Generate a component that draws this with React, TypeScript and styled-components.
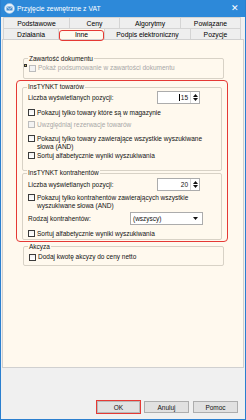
import React from "react";
import styled, { createGlobalStyle, css } from "styled-components";

const Global = createGlobalStyle`
  html, body { margin: 0; padding: 0; background: #ffffff; }
  body { font-family: "Liberation Sans", Arial, sans-serif; }
  * { box-sizing: border-box; }
`;

const Window = styled.div`
  width: 246px;
  height: 420px;
  border: 1px solid #2a7fcf;
  border-top: none;
  display: flex;
  flex-direction: column;
  background: #f0f0f0;
  font-size: 6.5px;
  color: #111;
`;

const TitleBar = styled.div`
  height: 17px;
  flex: 0 0 17px;
  background: #2d89d9;
  display: flex;
  align-items: center;
  padding: 0 6px 0 3px;
  gap: 2px;
  color: #fff;
  font-size: 6.8px;
`;

const TitleText = styled.span`
  flex: 1;
  white-space: nowrap;
`;

const CloseX = styled.span`
  font-size: 9px;
  line-height: 1;
`;

const Tabs = styled.div`
  display: flex;
  flex-direction: column;
  padding: 0 3px 0 2px;
`;

const TabRow = styled.div`
  display: flex;
  height: 11px;
`;

const Tab = styled.div<{ $w: number; $active?: boolean }>`
  width: ${(p) => p.$w}px;
  border: 1px solid #d4d4d4;
  border-bottom: none;
  margin-left: -1px;
  background: ${(p) => (p.$active ? "#fff9ee" : "#eeeeee")};
  display: flex;
  align-items: center;
  justify-content: center;
  font-size: 6.8px;
  color: #000;
  white-space: nowrap;
  position: relative;
  &:first-child { margin-left: 0; }
`;

const TabMark = styled.span`
  position: absolute;
  left: 0;
  top: 1px;
  right: 0;
  bottom: -2px;
  border: 1.5px solid #e53935;
  border-radius: 3px;
`;

const Panel = styled.div`
  height: 329px;
  flex: 0 0 329px;
  margin: 0 1px 0 1px;
  background: #fff9ee;
  border: 1px solid #d0d0d0;
  padding: 14px 15px 0 13px;
  display: flex;
  flex-direction: column;
`;

const Group = styled.div<{ $h: number; $mt?: number; $pt: number; $out?: boolean }>`
  margin: ${(p) => p.$mt ?? 0}px ${(p) => (p.$out ? 4 : 5)}px 0 ${(p) => (p.$out ? 7 : 5)}px;
  padding: ${(p) => p.$pt}px 0 0 5px;
  height: ${(p) => p.$h}px;
  flex: 0 0 ${(p) => p.$h}px;
  border: 1px solid #d8d2c6;
  border-radius: 2px;
  display: flex;
  flex-direction: column;
  position: relative;
`;

const Legend = styled.span`
  position: absolute;
  top: -4.5px;
  left: 4px;
  padding: 0 1px;
  background: #fff9ee;
  font-size: 6.5px;
  line-height: 7px;
  white-space: nowrap;
`;

const RedBox = styled.div`
  margin-top: 1px;
  height: 162px;
  flex: 0 0 162px;
  border: 1.5px solid #e53935;
  border-radius: 4px;
  display: flex;
  flex-direction: column;
  padding-top: 5.5px;
`;

const FieldRow = styled.div<{ $pr: number; $mb: number }>`
  height: 13px;
  flex: 0 0 13px;
  margin-bottom: ${(p) => p.$mb}px;
  padding-right: ${(p) => p.$pr}px;
  display: flex;
  justify-content: space-between;
  align-items: center;
  white-space: nowrap;
`;

const CheckRow = styled.label<{ $h: number; $disabled?: boolean }>`
  display: flex;
  align-items: flex-start;
  gap: 2px;
  height: ${(p) => p.$h}px;
  flex: 0 0 ${(p) => p.$h}px;
  line-height: 8px;
  color: ${(p) => (p.$disabled ? "#a7a7a7" : "#111")};
`;

const Box = styled.span<{ $disabled?: boolean }>`
  flex: 0 0 7px;
  width: 7px;
  height: 7px;
  margin-top: 0.5px;
  border: 1px solid ${(p) => (p.$disabled ? "#bcbcbc" : "#3c3c3c")};
  background: ${(p) =>
    p.$disabled ? "#f3f3f3" : "linear-gradient(#f2f2f2, #ffffff)"};
`;

const Label = styled.span`
  white-space: nowrap;
`;

const Wrap = styled.span`
  width: 180px;
`;

const Spin = styled.div`
  flex: 0 0 43px;
  width: 43px;
  height: 13px;
  border: 1px solid #acacac;
  background: #fff;
  display: flex;
  align-items: center;
`;

const SpinValue = styled.span`
  flex: 1;
  text-align: right;
  padding-right: 2px;
`;

const Caret = styled.span`
  display: inline-block;
  width: 1px;
  height: 7px;
  background: #000;
  margin-right: 1px;
  vertical-align: -1px;
`;

const SpinBtns = styled.div`
  width: 9px;
  height: 100%;
  border-left: 1px solid #d6d6d6;
  display: flex;
  flex-direction: column;
  align-items: center;
  justify-content: center;
  gap: 1px;
`;

const Select = styled.div`
  flex: 0 0 73px;
  width: 73px;
  height: 13px;
  border: 1px solid #acacac;
  background: #fff;
  display: flex;
  align-items: center;
  padding: 0 4px 0 2px;
  justify-content: space-between;
`;

const Tiny = styled.span`
  position: absolute;
  left: -5px;
  top: 0px;
  width: 3px;
  height: 3px;
  background: #d8c060;
  border: 0.5px solid #333;
`;

const RelWrap = styled.span`
  position: relative;
  display: inline-flex;
`;

const Footer = styled.div`
  flex: 1;
  display: flex;
  justify-content: flex-end;
  align-items: flex-start;
  padding: 33px 7px 0 0;
  gap: 4px;
`;

const Btn = styled.div<{ $mark?: boolean }>`
  width: 45px;
  height: 12px;
  border: 1px solid #adadad;
  background: #e1e1e1;
  display: flex;
  align-items: center;
  justify-content: center;
  font-size: 6.5px;
  ${(p) =>
    p.$mark &&
    css`
      outline: 1.5px solid #e53935;
      outline-offset: 0px;
      border-color: #b8b8b8;
      width: 43px;
    `}
`;

const Arrow = ({ up }: { up?: boolean }) => (
  <svg width="5" height="3" viewBox="0 0 5 3">
    <path d={up ? "M0 3 L2.5 0 L5 3 Z" : "M0 0 L2.5 3 L5 0 Z"} fill="#111" />
  </svg>
);

const Check = ({
  h,
  disabled,
  children,
  marker,
}: {
  h: number;
  disabled?: boolean;
  children: React.ReactNode;
  marker?: boolean;
}) => (
  <CheckRow $h={h} $disabled={disabled}>
    <RelWrap>
      {marker && <Tiny />}
      <Box $disabled={disabled} />
    </RelWrap>
    {children}
  </CheckRow>
);

export default function App() {
  return (
    <>
      <Global />
      <Window>
        <TitleBar>
          <svg width="11" height="11" viewBox="0 0 11 11">
            <circle cx="5.5" cy="5.5" r="5" fill="#e8f2fb" stroke="#9cc3e6" strokeWidth="0.6" />
            <rect x="2.5" y="3.5" width="6" height="4" fill="#4a8fd0" />
            <path d="M2.5 3.5 L5.5 6 L8.5 3.5" stroke="#fff" strokeWidth="0.6" fill="none" />
          </svg>
          <TitleText>Przyjęcie zewnętrzne z VAT</TitleText>
          <CloseX>✕</CloseX>
        </TitleBar>
        <Tabs>
          <TabRow>
            <Tab $w={67}>Podstawowe</Tab>
            <Tab $w={51}>Ceny</Tab>
            <Tab $w={62}>Algorytmy</Tab>
            <Tab $w={61}>Powiązane</Tab>
          </TabRow>
          <TabRow>
            <Tab $w={56}>Działania</Tab>
            <Tab $w={47} $active>
              Inne
              <TabMark />
            </Tab>
            <Tab $w={87}>Podpis elektroniczny</Tab>
            <Tab $w={51}>Pozycje</Tab>
          </TabRow>
        </Tabs>
        <Panel>
          <Group $h={21} $mt={4} $pt={5} $out>
            <Legend>Zawartość dokumentu</Legend>
            <Check h={8} disabled marker>
              <Label>Pokaż podsumowanie w zawartości dokumentu</Label>
            </Check>
          </Group>
          <RedBox>
            <Group $h={84} $pt={3}>
              <Legend>InsTYNKT towarów</Legend>
              <FieldRow $pr={21} $mb={5}>
                <Label>Liczba wyświetlanych pozycji:</Label>
                <Spin>
                  <SpinValue>
                    <Caret />15
                  </SpinValue>
                  <SpinBtns>
                    <Arrow up />
                    <Arrow />
                  </SpinBtns>
                </Spin>
              </FieldRow>
              <Check h={12}>
                <Label>Pokazuj tylko towary które są w magazynie</Label>
              </Check>
              <Check h={14} disabled>
                <Label>Uwzględniaj rezerwacje towarów</Label>
              </Check>
              <Check h={17}>
                <Wrap>Pokazuj tylko towary zawierające wszystkie wyszukiwane słowa (AND)</Wrap>
              </Check>
              <Check h={9}>
                <Label>Sortuj alfabetycznie wyniki wyszukiwania</Label>
              </Check>
            </Group>
            <Group $h={67} $mt={2} $pt={4}>
              <Legend>InsTYNKT kontrahentów</Legend>
              <FieldRow $pr={21} $mb={3}>
                <Label>Liczba wyświetlanych pozycji:</Label>
                <Spin>
                  <SpinValue>20</SpinValue>
                  <SpinBtns>
                    <Arrow up />
                    <Arrow />
                  </SpinBtns>
                </Spin>
              </FieldRow>
              <Check h={18}>
                <Wrap>Pokazuj tylko kontrahentów zawierających wszystkie wyszukiwane słowa (AND)</Wrap>
              </Check>
              <FieldRow $pr={18} $mb={5}>
                <Label>Rodzaj kontrahentów:</Label>
                <Select>
                  <span>(wszyscy)</span>
                  <Arrow />
                </Select>
              </FieldRow>
              <Check h={8}>
                <Label>Sortuj alfabetycznie wyniki wyszukiwania</Label>
              </Check>
            </Group>
          </RedBox>
          <Group $h={20} $mt={4} $pt={6} $out>
            <Legend>Akcyza</Legend>
            <Check h={8}>
              <Label>Dodaj kwotę akcyzy do ceny netto</Label>
            </Check>
          </Group>
        </Panel>
        <Footer>
          <Btn $mark>OK</Btn>
          <Btn>Anuluj</Btn>
          <Btn>Pomoc</Btn>
        </Footer>
      </Window>
    </>
  );
}
